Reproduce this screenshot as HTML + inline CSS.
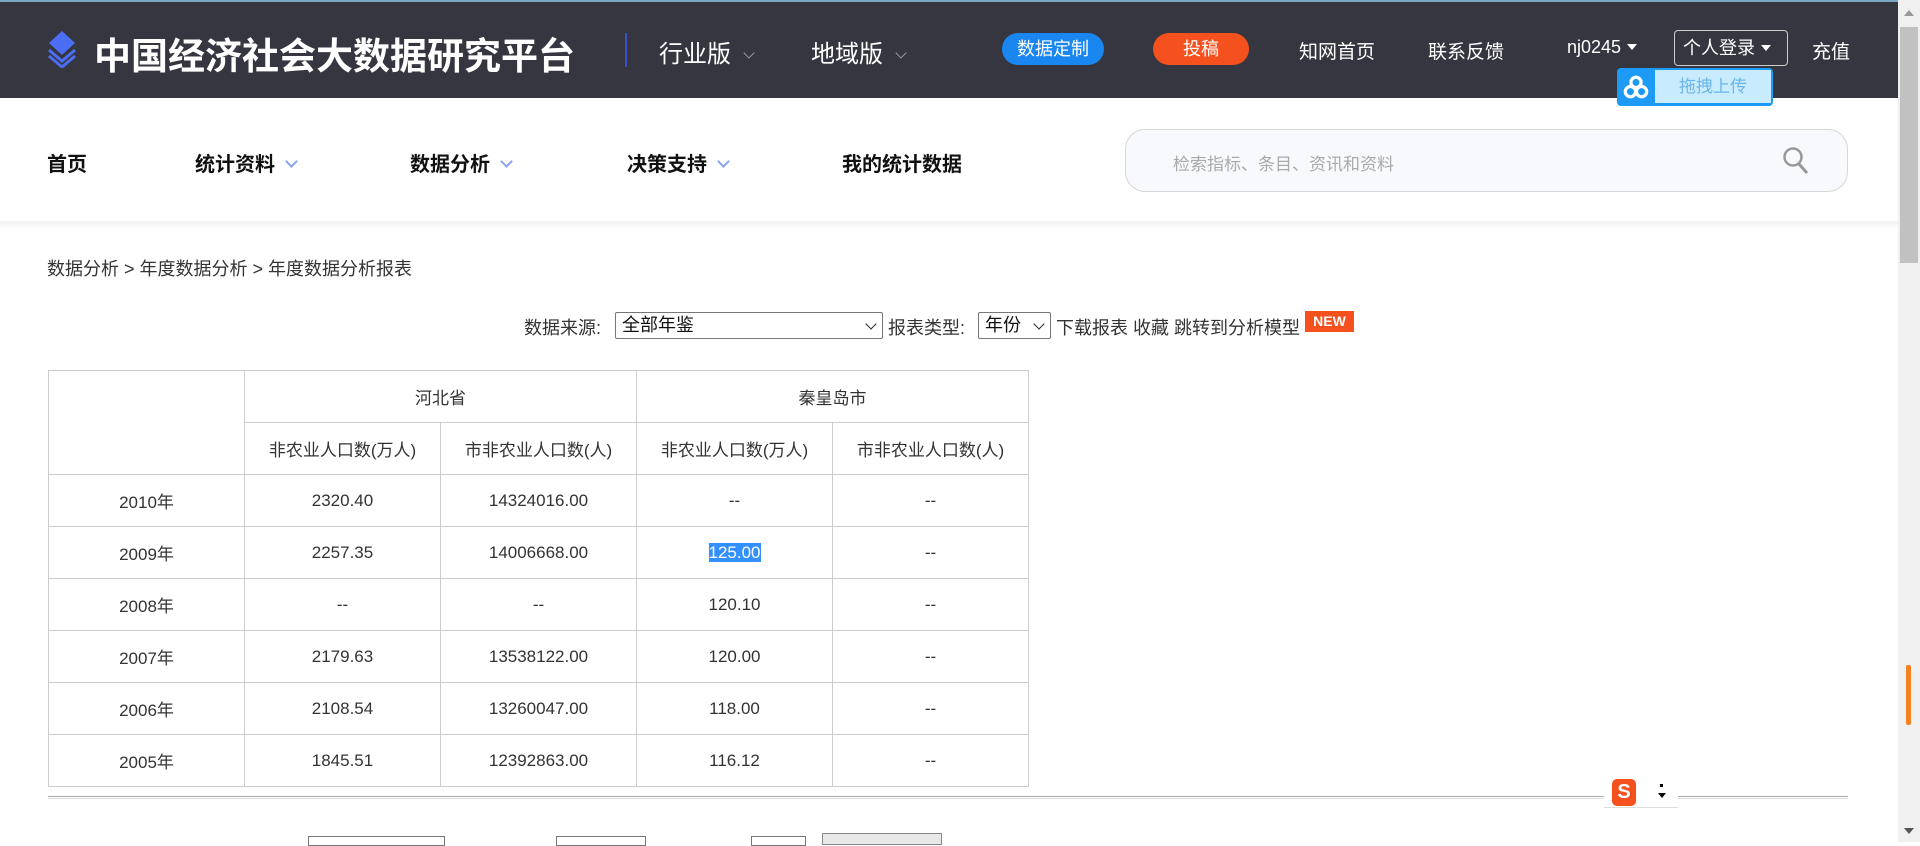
<!DOCTYPE html>
<html><head><meta charset="utf-8"><style>
*{margin:0;padding:0;box-sizing:border-box}
body{width:1920px;height:842px;overflow:hidden;background:#fff;font-family:"Liberation Sans","Noto Sans CJK SC",sans-serif;color:#333;position:relative}
.a{position:absolute;white-space:nowrap}
.hdr{position:absolute;left:0;top:0;width:1898px;height:98px;background:#35363f;border-top:2px solid #7aa6c2}
.w{color:#fff}
.nav{font-size:20px;font-weight:bold;color:#111;top:148px}
.chev{display:inline-block;width:9px;height:9px;border-right:2px solid #8aa4f0;border-bottom:2px solid #8aa4f0;transform:rotate(45deg);margin-left:12px;position:relative;top:-5px}
.hchev{display:inline-block;width:8px;height:8px;border-right:1.5px solid #999;border-bottom:1.5px solid #999;transform:rotate(45deg);margin-left:14px;position:relative;top:-5px}
table{position:absolute;left:48px;top:370px;border-collapse:collapse;font-size:17px;color:#333}
td{border:1px solid #ccc;width:196px;text-align:center;height:52px;padding:0}
.tri{display:inline-block;border-left:5px solid transparent;border-right:5px solid transparent;border-top:6px solid #fff;margin-left:6px;position:relative;top:-3px}
.sel{position:absolute;border:1px solid #767676;border-radius:2px;background:#fff;font-size:18px;color:#111;padding-left:6px;line-height:25px}
.sa{position:absolute;right:7px;top:7px;width:8px;height:8px;border-right:1.5px solid #222;border-bottom:1.5px solid #222;transform:rotate(45deg)}
</style></head><body>
<div class="hdr"></div>
<svg class="a" style="left:47px;top:30px" width="30" height="38" viewBox="0 0 30 38"><path d="M15 1L28 13L15 25L2 13Z" fill="#4b6ef5"/><path d="M2 20L15 31L28 20" stroke="#4b6ef5" stroke-width="3" fill="none"/><path d="M2 26L15 37L28 26" stroke="#4b6ef5" stroke-width="3" fill="none"/></svg>
<div class="a w" style="left:94px;top:26px;font-size:37px;font-weight:bold">中国经济社会大数据研究平台</div>
<div class="a" style="left:625px;top:33px;width:2px;height:34px;background:#3552c9"></div>
<div class="a w" style="left:659px;top:34px;font-size:24px">行业版<span class="hchev"></span></div>
<div class="a w" style="left:811px;top:34px;font-size:24px">地域版<span class="hchev"></span></div>
<div class="a w" style="left:1002px;top:33px;width:102px;height:32px;border-radius:16px;background:#1a86f0;font-size:18px;text-align:center;line-height:32px">数据定制</div>
<div class="a w" style="left:1153px;top:33px;width:96px;height:32px;border-radius:16px;background:#f5511e;font-size:18px;text-align:center;line-height:32px">投稿</div>
<div class="a w" style="left:1299px;top:37px;font-size:19px">知网首页</div>
<div class="a w" style="left:1428px;top:37px;font-size:19px">联系反馈</div>
<div class="a w" style="left:1567px;top:37px;font-size:18px">nj0245<span class="tri"></span></div>
<div class="a w" style="left:1674px;top:30px;width:114px;height:36px;border:1px solid #ccc;border-radius:4px;font-size:18px;line-height:34px;padding-left:8px">个人登录<span class="tri"></span></div>
<div class="a w" style="left:1812px;top:37px;font-size:19px">充值</div>
<div class="a" style="left:1617px;top:68px;width:156px;height:38px;border-radius:4px;background:#1d9af5;overflow:hidden">
<svg class="a" style="left:6px;top:6px" width="26" height="26" viewBox="0 0 28 28"><circle cx="14" cy="9" r="5.5" fill="none" stroke="#fff" stroke-width="3.5"/><circle cx="8" cy="19" r="5.5" fill="none" stroke="#fff" stroke-width="3.5"/><circle cx="20" cy="19" r="5.5" fill="none" stroke="#fff" stroke-width="3.5"/></svg>
<div class="a" style="left:38px;top:2px;width:116px;height:33px;background:#c8ecfd;color:#6cb5ea;font-size:17px;line-height:33px;text-align:center">拖拽上传</div></div>
<div class="a" style="left:1898px;top:0;width:22px;height:842px;background:#f0f0f0"></div>
<div class="a" style="left:1900px;top:27px;width:18px;height:236px;background:#c1c1c1"></div>
<div class="a" style="left:1904px;top:10px;border-left:5px solid transparent;border-right:5px solid transparent;border-bottom:6px solid #999"></div>
<div class="a" style="left:1904px;top:828px;border-left:5px solid transparent;border-right:5px solid transparent;border-top:6px solid #555"></div>
<div class="a" style="left:1906px;top:665px;width:5px;height:60px;background:#f5821f;border-radius:2px"></div>
<div class="a" style="left:0;top:221px;width:1898px;height:8px;background:linear-gradient(#f1f1f1,#fff)"></div>
<div class="a nav" style="left:47px">首页</div>
<div class="a nav" style="left:195px">统计资料<span class="chev"></span></div>
<div class="a nav" style="left:410px">数据分析<span class="chev"></span></div>
<div class="a nav" style="left:627px">决策支持<span class="chev"></span></div>
<div class="a nav" style="left:842px">我的统计数据</div>
<div class="a" style="left:1125px;top:129px;width:723px;height:63px;border:1px solid #d6d6d6;border-radius:20px;background:#f8f9fc"></div>
<div class="a" style="left:1173px;top:150px;font-size:17px;color:#aaa">检索指标、条目、资讯和资料</div>
<svg class="a" style="left:1782px;top:146px" width="28" height="30" viewBox="0 0 28 30"><circle cx="11" cy="11" r="8.5" fill="none" stroke="#999" stroke-width="2.5"/><path d="M17 18L25 27" stroke="#999" stroke-width="3"/></svg>
<div class="a" style="left:47px;top:255px;font-size:18px;color:#333">数据分析 &gt; 年度数据分析 &gt; 年度数据分析报表</div>
<div class="a" style="left:524px;top:314px;font-size:18px;color:#333">数据来源:</div>
<div class="sel" style="left:615px;top:312px;width:268px;height:27px">全部年鉴<span class="sa"></span></div>
<div class="a" style="left:888px;top:314px;font-size:18px;color:#333">报表类型:</div>
<div class="sel" style="left:978px;top:312px;width:73px;height:27px">年份<span class="sa"></span></div>
<div class="a" style="left:1056px;top:314px;font-size:18px;color:#333">下载报表 收藏 跳转到分析模型</div>
<div class="a" style="left:1305px;top:311px;width:49px;height:21px;background:#f5511e;color:#fff;font-size:14px;font-weight:bold;text-align:center;line-height:21px">NEW</div>
<table>
<tr><td rowspan="2" style="height:104px"></td><td colspan="2">河北省</td><td colspan="2">秦皇岛市</td></tr>
<tr><td>非农业人口数(万人)</td><td>市非农业人口数(人)</td><td>非农业人口数(万人)</td><td>市非农业人口数(人)</td></tr>
<tr><td>2010年</td><td>2320.40</td><td>14324016.00</td><td>--</td><td>--</td></tr>
<tr><td>2009年</td><td>2257.35</td><td>14006668.00</td><td><span style="background:#3390ff;color:#fff">125.00</span></td><td>--</td></tr>
<tr><td>2008年</td><td>--</td><td>--</td><td>120.10</td><td>--</td></tr>
<tr><td>2007年</td><td>2179.63</td><td>13538122.00</td><td>120.00</td><td>--</td></tr>
<tr><td>2006年</td><td>2108.54</td><td>13260047.00</td><td>118.00</td><td>--</td></tr>
<tr><td>2005年</td><td>1845.51</td><td>12392863.00</td><td>116.12</td><td>--</td></tr>
</table>
<div class="a" style="left:48px;top:796px;width:1800px;height:3px;border-top:1px solid #aaa;border-bottom:1px solid #ddd"></div>
<div class="a" style="left:1604px;top:778px;width:74px;height:30px;background:#fff;border-bottom:1px solid #ddd"></div>
<div class="a" style="left:1612px;top:779px;width:24px;height:27px;background:#f5511e;border-radius:5px;color:#fff;font-weight:bold;font-size:20px;text-align:center;line-height:27px">S</div>
<div class="a" style="left:1660px;top:784px;width:3px;height:3px;background:#000"></div>
<div class="a" style="left:1658px;top:793px;border-left:4px solid transparent;border-right:4px solid transparent;border-top:5px solid #000"></div>
<div class="a" style="left:308px;top:836px;width:137px;height:10px;border:1px solid #767676"></div>
<div class="a" style="left:556px;top:836px;width:90px;height:10px;border:1px solid #767676"></div>
<div class="a" style="left:751px;top:836px;width:55px;height:10px;border:1px solid #767676"></div>
<div class="a" style="left:822px;top:833px;width:120px;height:12px;border:1px solid #888;background:#e8e8e8"></div>
</body></html>
